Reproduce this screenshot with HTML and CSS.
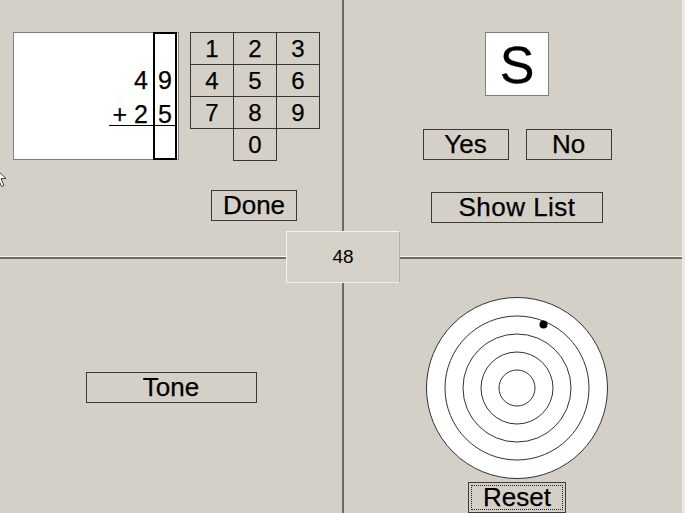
FILE: index.html
```html
<!DOCTYPE html>
<html>
<head>
<meta charset="utf-8">
<link rel="stylesheet" href="styles.css">
</head>
<body>
<div class="app">
  <section class="q q-tl">
    <div class="tl-row">
      <div class="sum">
        <div class="sum-left">
          <div class="num">4</div>
          <div class="num num-2 rule-left">+ 2</div>
        </div>
        <div class="sum-col">
          <div class="num">9</div>
          <div class="num num-2 rule-col">5</div>
        </div>
      </div>
      <div class="keypad">
        <div class="key">1</div><div class="key">2</div><div class="key">3</div>
        <div class="key">4</div><div class="key">5</div><div class="key">6</div>
        <div class="key">7</div><div class="key">8</div><div class="key">9</div>
        <div class="key key-0">0</div>
      </div>
    </div>
    <button class="btn btn-done">Done</button>
  </section>

  <section class="q q-tr">
    <div class="letter">S</div>
    <div class="yn-row">
      <button class="btn btn-yn">Yes</button>
      <button class="btn btn-yn">No</button>
    </div>
    <button class="btn btn-list">Show List</button>
  </section>

  <section class="q q-bl">
    <button class="btn btn-tone">Tone</button>
  </section>

  <section class="q q-br">
    <svg class="target" width="184" height="184" viewBox="0 0 184 184">
      <circle cx="92" cy="92" r="90.5" fill="#fff" stroke="#333" stroke-width="1"/>
      <circle cx="92" cy="92" r="72" fill="none" stroke="#333" stroke-width="1"/>
      <circle cx="92" cy="92" r="54" fill="none" stroke="#333" stroke-width="1"/>
      <circle cx="92" cy="92" r="36" fill="none" stroke="#333" stroke-width="1"/>
      <circle cx="92" cy="92" r="18" fill="none" stroke="#333" stroke-width="1"/>
      <circle cx="118.5" cy="28.5" r="4" fill="#000"/>
    </svg>
    <button class="btn btn-reset">Reset</button>
  </section>

  <div class="score">48</div>

  <svg class="cursor" width="14" height="22" viewBox="0 0 14 22">
    <path d="M1 1 L1 16 L4.5 12.5 L7.5 19.5 L10 18.5 L7 11.5 L12 11.5 Z" fill="#fff" stroke="#444" stroke-width="1"/>
  </svg>
</div>
</body>
</html>
```

FILE: styles.css
```css
html, body {
  margin: 0;
  padding: 0;
  background: #e9e8e5;
}

body {
  font-family: "Liberation Sans", Arial, sans-serif;
  color: #000;
}

.app {
  position: relative;
  width: 682px;
  height: 513px;
  overflow: hidden;
  display: grid;
  grid-template-columns: 342px 338px;
  grid-template-rows: 257px 254px;
  gap: 2px;
  background: #6a6a6a;
}

.q {
  background: #d4d0c8;
  box-sizing: border-box;
}

.q-tl, .q-tr {
  border-bottom: 1px solid #f4f3f0;
}

/* ---------- buttons ---------- */
.btn {
  -webkit-appearance: none;
  appearance: none;
  box-sizing: border-box;
  height: 31px;
  padding: 0;
  margin: 0;
  border: 1px solid #3a3a3a;
  background: #d4d0c8;
  font-family: "Liberation Sans", Arial, sans-serif;
  font-size: 26px;
  line-height: 29px;
  color: #000;
  text-align: center;
  display: block;
  -webkit-text-stroke: 0.25px #000;
}

/* ---------- top left ---------- */
.q-tl {
  padding: 32px 0 0 13px;
}

.tl-row {
  display: flex;
  align-items: flex-start;
  gap: 11px;
}

.sum {
  box-sizing: border-box;
  width: 166px;
  height: 128px;
  background: #fff;
  border: 1px solid #808080;
  display: flex;
  font-size: 25px;
  -webkit-text-stroke: 0.25px #000;
}

.sum-left {
  flex: 1;
  display: flex;
  flex-direction: column;
  align-items: flex-end;
  padding-top: 36px;
}

.sum-left .num {
  padding-right: 5px;
}

.num {
  height: 22px;
  line-height: 22px;
}

.num-2 {
  margin-top: 12px;
}

.rule-left {
  padding-left: 4px;
  border-bottom: 1px solid #000;
}

.sum-col {
  box-sizing: border-box;
  width: 24px;
  margin: -1px 1px -1px 0;
  border: 2px solid #000;
  padding-top: 35px;
  text-align: center;
}

.rule-col {
  border-bottom: 1px solid #000;
}

.keypad {
  display: grid;
  grid-template-columns: repeat(3, 43px);
  grid-auto-rows: 32px;
  font-size: 24px;
  -webkit-text-stroke: 0.25px #000;
}

.key {
  box-sizing: border-box;
  width: 44px;
  height: 33px;
  border: 1px solid #363636;
  background: #d4d0c8;
  display: flex;
  align-items: center;
  justify-content: center;
}

.key-0 {
  grid-column: 2;
}

.btn-done {
  width: 86px;
  margin: 30px 0 0 198px;
}

/* ---------- top right ---------- */
.q-tr {
  padding: 32px 0 0 8px;
  display: flex;
  flex-direction: column;
  align-items: center;
}

.letter {
  box-sizing: border-box;
  width: 64px;
  height: 64px;
  background: #fff;
  border: 1px solid #808080;
  font-size: 52px;
  line-height: 64px;
  text-align: center;
  -webkit-text-stroke: 0.3px #000;
}

.yn-row {
  display: flex;
  gap: 17px;
  margin-top: 33px;
}

.btn-yn {
  width: 86px;
}

.btn-list {
  width: 172px;
  margin-top: 32px;
  letter-spacing: 0.5px;
}

/* ---------- bottom left ---------- */
.q-bl {
  padding-top: 113px;
  display: flex;
  flex-direction: column;
  align-items: center;
}

.btn-tone {
  width: 171px;
}

/* ---------- bottom right ---------- */
.q-br {
  padding: 37px 0 0 8px;
  display: flex;
  flex-direction: column;
  align-items: center;
}

.target {
  display: block;
}

.btn-reset {
  width: 98px;
  margin-top: 2px;
  outline: 1px dotted #222;
  outline-offset: -4px;
}

/* ---------- overlays ---------- */
.score {
  position: absolute;
  left: 286px;
  top: 231px;
  box-sizing: border-box;
  width: 114px;
  height: 52px;
  background: #d6d2ca;
  border-top: 1px solid #f6f5f2;
  border-left: 1px solid #f6f5f2;
  border-right: 1px solid #b4b0a8;
  border-bottom: 1px solid #ecebe7;
  font-size: 19px;
  display: flex;
  align-items: center;
  justify-content: center;
}

.cursor {
  position: absolute;
  left: -6px;
  top: 167px;
}
```
